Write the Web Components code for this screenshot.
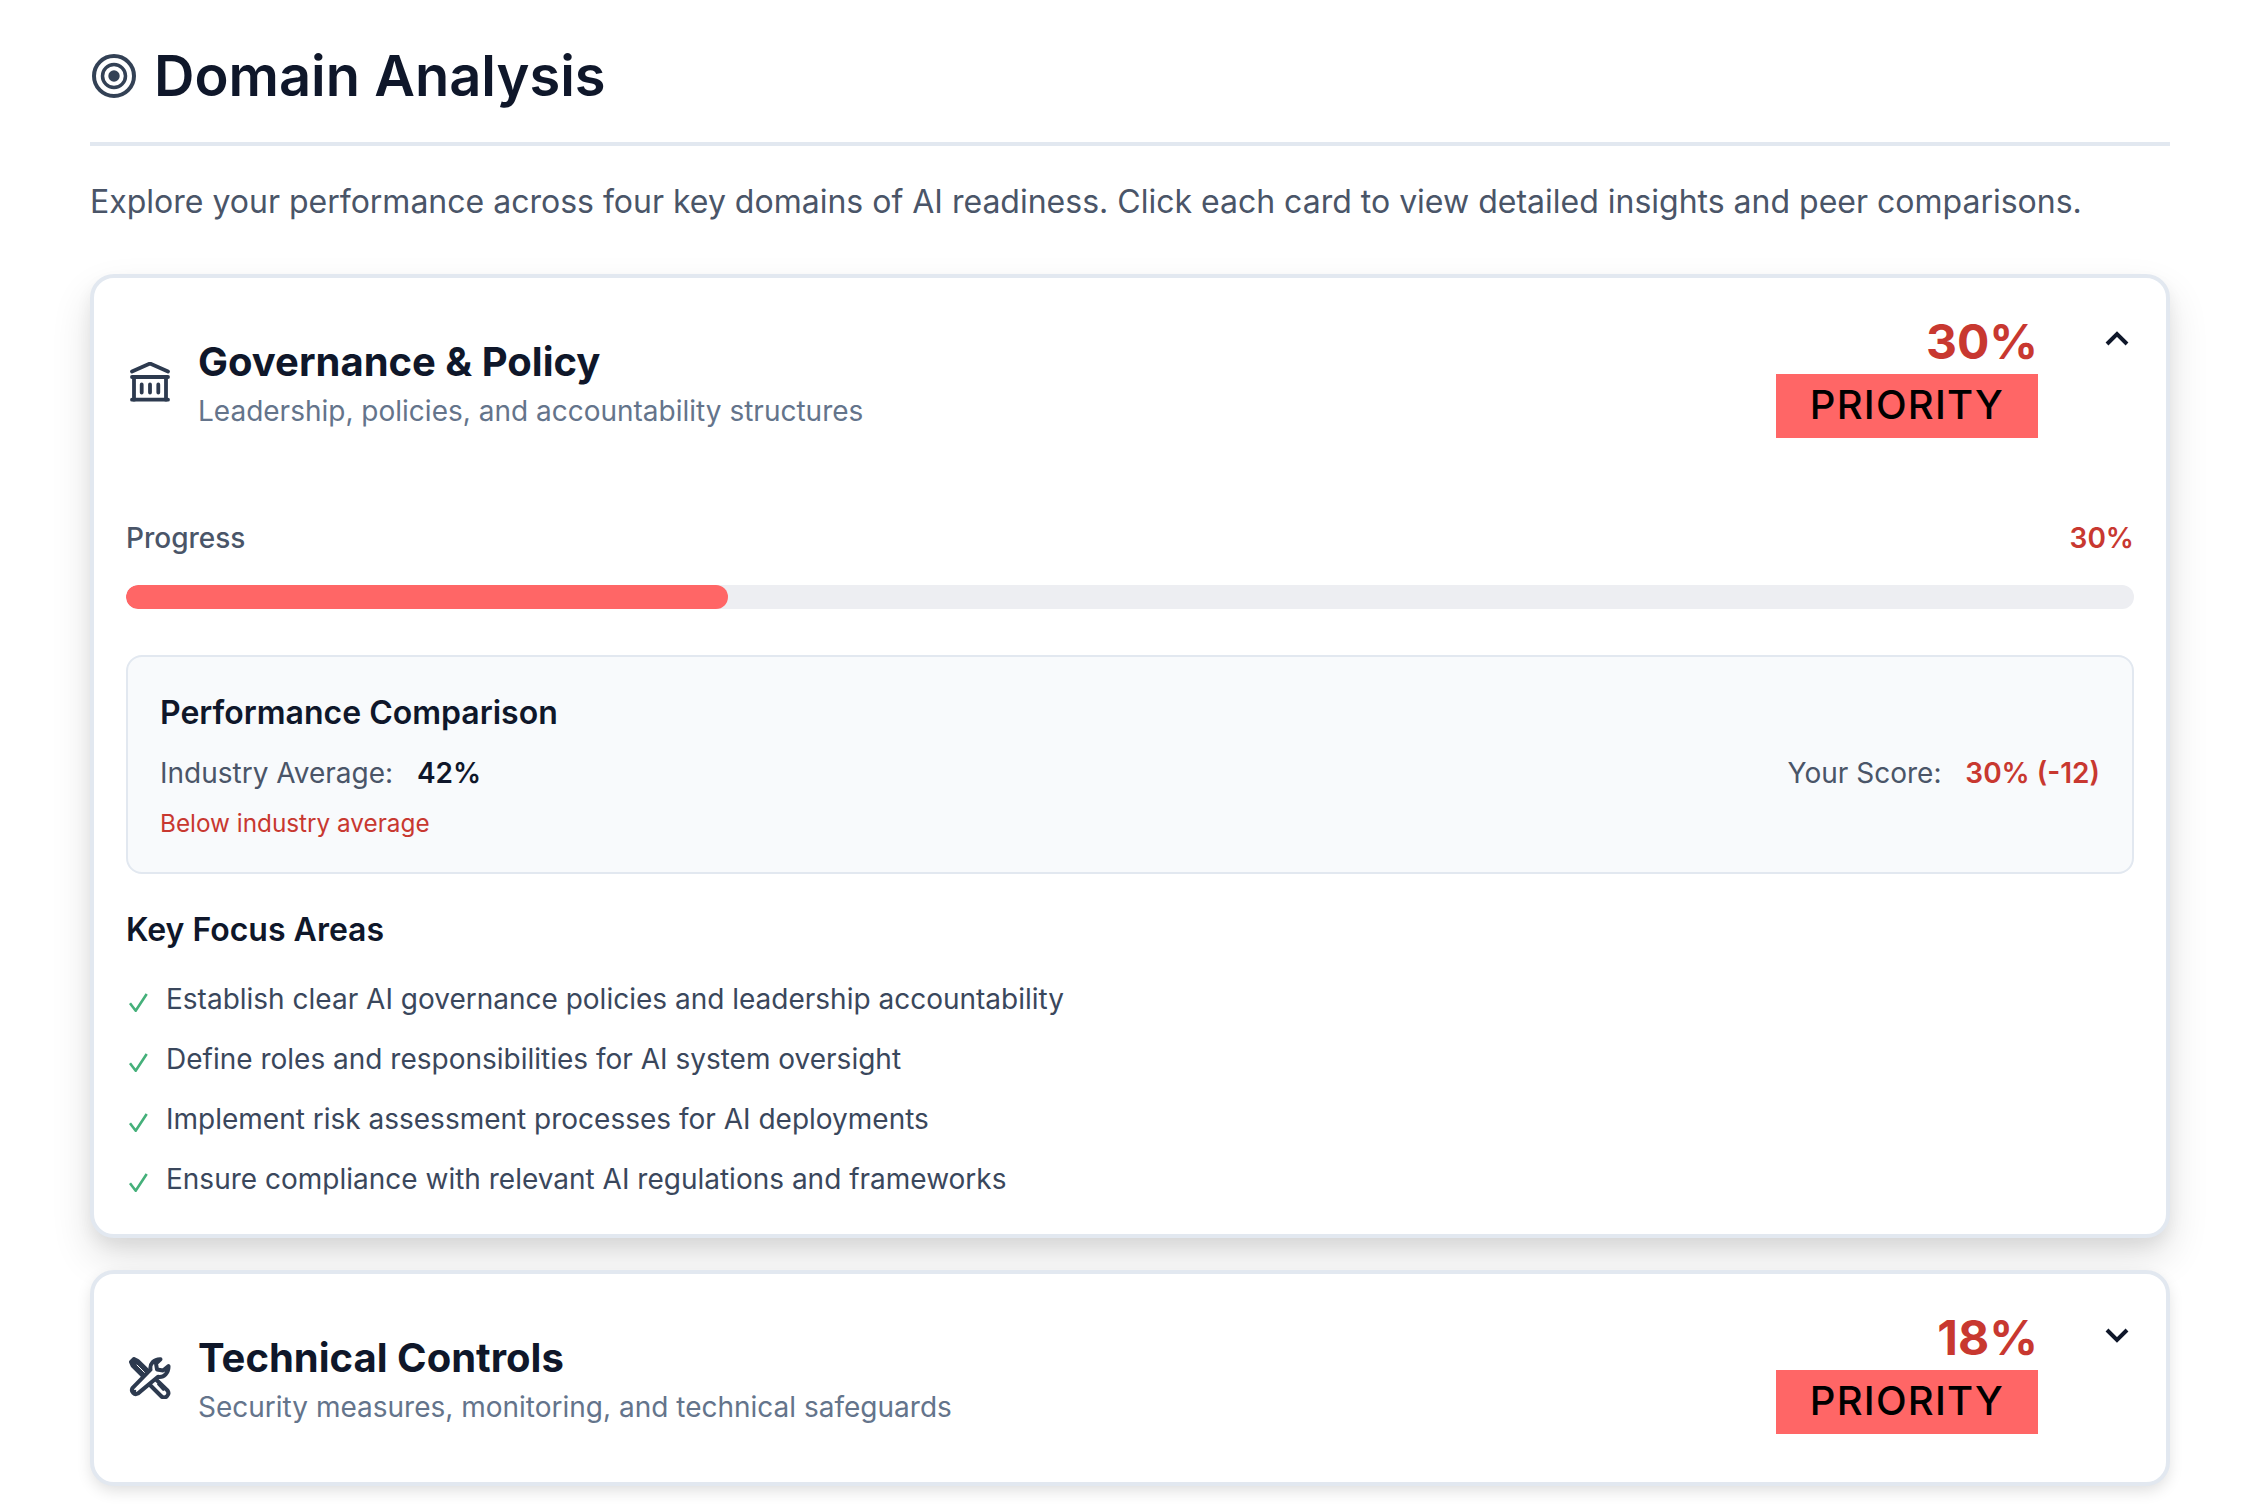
<!DOCTYPE html>
<html lang="en">
<head>
<meta charset="utf-8">
<title>Domain Analysis</title>
<style>
  html, body { margin: 0; background: #fff; }
  body { font-family: Inter, "Liberation Sans", sans-serif; overflow: hidden; height: 1510px; }
</style>
</head>
<body>
<domain-analysis>
  <domain-card name="Governance &amp; Policy" desc="Leadership, policies, and accountability structures" score="30" open icon="bank">
    <card-progress value="30"></card-progress>
    <peer-compare industry="42%" yours="30% (-12)" note="Below industry average"></peer-compare>
    <focus-list>
      <focus-item>Establish clear AI governance policies and leadership accountability</focus-item>
      <focus-item>Define roles and responsibilities for AI system oversight</focus-item>
      <focus-item>Implement risk assessment processes for AI deployments</focus-item>
      <focus-item>Ensure compliance with relevant AI regulations and frameworks</focus-item>
    </focus-list>
  </domain-card>
  <domain-card name="Technical Controls" desc="Security measures, monitoring, and technical safeguards" score="18" icon="tools"></domain-card>
</domain-analysis>

<script>
const ICONS = {
  bank: `<svg viewBox="0 0 40 40" width="40" height="40" fill="none" stroke="#2d3a4f" stroke-width="3.800" stroke-linecap="round" stroke-linejoin="round">
      <path d="M2 9.500 20 1.500l18 8"/>
      <path d="M2 15h36M2 37.700h36"/>
      <path d="M4 15v22.700M36 15v22.700"/>
      <path d="M11.700 22.500v8M20 22.500v8M28.300 22.500v8"/>
    </svg>`,
  tools: `<svg viewBox="0 0 42 42" width="42" height="42" fill="none" stroke="#2d3a4f" stroke-width="4" stroke-linecap="round" stroke-linejoin="round">
      <path d="M2 5 5 2l3.500 1.700L19 14l-5 5L3.500 8.500z" fill="#2d3a4f"/>
      <path d="M8 8l7.500 7.500" stroke="#fff" stroke-width="1"/>
      <path d="M25.500 21l13 12.500a4.300 4.300 0 0 1-6 6L20 27" fill="#fff"/>
      <path d="M29.300 27.300l5 5.400" stroke-width="2.400"/>
      <path d="M3.400 31.200 21.500 12.700C20.500 7 25 2 31.500 2.200L27 6.500l1 6 6 1L39.500 9.200c.3 6.300-4.500 11.800-10.500 10.600L8.800 36.600a4 4 0 0 1-5.400-5.400z" fill="#fff"/>
      <circle cx="6" cy="34" r="1.300" fill="#2d3a4f" stroke="none"/>
    </svg>`
};

class DomainAnalysis extends HTMLElement {
  connectedCallback() {
    this.attachShadow({ mode: 'open' });
    this.shadowRoot.innerHTML = `
      <style>
        :host { display: block; padding: 37px 90px 0; }
        header { display: flex; align-items: center; gap: 18px; padding-bottom: 27px; border-bottom: 4px solid #e2e8f0; }
        svg { margin-left: 2px; }
        h2 { margin: 0; font-size: 56px; line-height: 78px; font-weight: 600; color: #0f172a; }
        p { margin: 0; padding: 36px 0 52px; font-size: 32px; line-height: 40px; color: #4a5568; }
        .cards { display: flex; flex-direction: column; gap: 32px; }
      </style>
      <header>
        <svg viewBox="0 0 44 44" width="44" height="44" fill="none" stroke="#334155" stroke-width="4">
          <circle cx="22" cy="22" r="20"/>
          <circle cx="22" cy="22" r="11.500" stroke-width="3.500"/>
          <circle cx="22" cy="22" r="5.700" fill="#334155" stroke="none"/>
        </svg>
        <h2>Domain Analysis</h2>
      </header>
      <p>Explore your performance across four key domains of AI readiness. Click each card to view detailed insights and peer comparisons.</p>
      <div class="cards"><slot></slot></div>
    `;
  }
}
customElements.define('domain-analysis', DomainAnalysis);

class DomainCard extends HTMLElement {
  connectedCallback() {
    const open = this.hasAttribute('open');
    this.attachShadow({ mode: 'open' });
    this.shadowRoot.innerHTML = `
      <style>
        :host {
          display: block;
          background: #fff;
          border: 4px solid #e2e8f0;
          border-radius: 24px;
          padding: 32px 32px 25px;
          box-shadow: 0 6px 16px -2px rgba(0,0,0,.14);
        }
        :host([open]) {
          box-shadow: 0 20px 40px rgba(0,0,0,.12), 0 8px 16px rgba(0,0,0,.06);
        }
        .head { display: flex; align-items: center; height: 144px; margin-bottom: 7px; }
        .icon { width: 42px; margin: 0 27px 0 3px; display: flex; justify-content: center; }
        .txt { flex: 1; padding-top: 4px; }
        h3 { margin: 0; font-size: 40px; line-height: 48px; font-weight: 700; color: #0f172a; }
        .desc { font-size: 28px; line-height: 40px; color: #64748b; margin-top: 5px; }
        .score { align-self: flex-start; display: flex; flex-direction: column; align-items: flex-end; }
        .num { font-size: 48px; line-height: 64px; font-weight: 700; color: #c83830; }
        .badge { background: #ff6666; color: #000; font-size: 40px; line-height: 62px; padding-bottom: 2px; font-weight: 500; padding-left: 34px; padding-right: 34px; letter-spacing: 1.200px; }
        .chev { align-self: flex-start; width: 30px; margin: 19px 2px 0 64px; }
      </style>
      <div class="head">
        <div class="icon">${ICONS[this.getAttribute('icon')]}</div>
        <div class="txt">
          <h3>${this.getAttribute('name').replace('&', '&amp;')}</h3>
          <div class="desc">${this.getAttribute('desc')}</div>
        </div>
        <div class="score">
          <div class="num">${this.getAttribute('score')}%</div>
          <div class="badge">PRIORITY</div>
        </div>
        <svg class="chev" viewBox="0 0 30 20" width="30" height="20" fill="none" stroke="#0f172a" stroke-width="4">
          <path d="${open ? 'M5 15 15 5l10 10' : 'M5 5l10 10L25 5'}"/>
        </svg>
      </div>
      <slot></slot>
    `;
  }
}
customElements.define('domain-card', DomainCard);

class CardProgress extends HTMLElement {
  connectedCallback() {
    const v = this.getAttribute('value');
    this.attachShadow({ mode: 'open' });
    this.shadowRoot.innerHTML = `
      <style>
        :host { display: block; margin-top: 64px; }
        .row { display: flex; justify-content: space-between; font-size: 28px; line-height: 40px; color: #4a5568; font-weight: 500; }
        b { font-weight: 600; color: #c83830; }
        .track { height: 24px; margin-top: 27px; border-radius: 12px; background: #edeef2; overflow: hidden; }
        .fill { height: 100%; border-radius: 12px; background: #ff6666; }
      </style>
      <div class="row"><span>Progress</span><b>${v}%</b></div>
      <div class="track"><div class="fill" style="width:${v}%"></div></div>
    `;
  }
}
customElements.define('card-progress', CardProgress);

class PeerCompare extends HTMLElement {
  connectedCallback() {
    this.attachShadow({ mode: 'open' });
    this.shadowRoot.innerHTML = `
      <style>
        :host { display: block; margin-top: 46px; padding: 36px 32px 31px; background: #f8fafc; border: 2px solid #e2e8f0; border-radius: 16px; }
        h4 { margin: 0; font-size: 32px; line-height: 40px; font-weight: 600; color: #0f172a; }
        .row { display: flex; justify-content: space-between; margin-top: 20px; font-size: 28px; line-height: 40px; color: #4a5568; }
        b { font-weight: 600; color: #0f172a; margin-left: 16px; }
        b.bad { color: #c83830; }
        .note { margin-top: 12px; font-size: 24.300px; line-height: 36px; color: #c83830; }
      </style>
      <h4>Performance Comparison</h4>
      <div class="row">
        <span>Industry Average: <b>${this.getAttribute('industry')}</b></span>
        <span>Your Score: <b class="bad">${this.getAttribute('yours')}</b></span>
      </div>
      <div class="note">${this.getAttribute('note')}</div>
    `;
  }
}
customElements.define('peer-compare', PeerCompare);

class FocusList extends HTMLElement {
  connectedCallback() {
    this.attachShadow({ mode: 'open' });
    this.shadowRoot.innerHTML = `
      <style>
        :host { display: block; margin-top: 36px; }
        h4 { margin: 0 0 19px; font-size: 32px; line-height: 40px; font-weight: 600; color: #0f172a; }
      </style>
      <h4>Key Focus Areas</h4>
      <slot></slot>
    `;
  }
}
customElements.define('focus-list', FocusList);

class FocusItem extends HTMLElement {
  connectedCallback() {
    this.attachShadow({ mode: 'open' });
    this.shadowRoot.innerHTML = `
      <style>
        :host { display: flex; align-items: center; height: 60px; font-size: 28px; color: #3a475c; }
        svg { flex: none; margin: 6px 18px 0 2px; }
      </style>
      <svg viewBox="0 0 20 20" width="20" height="20" fill="none" stroke="#45b07a" stroke-width="2.600">
        <path d="M2 11.300 7.700 18.700 18.700 2"/>
      </svg><slot></slot>
    `;
  }
}
customElements.define('focus-item', FocusItem);
</script>
</body>
</html>
